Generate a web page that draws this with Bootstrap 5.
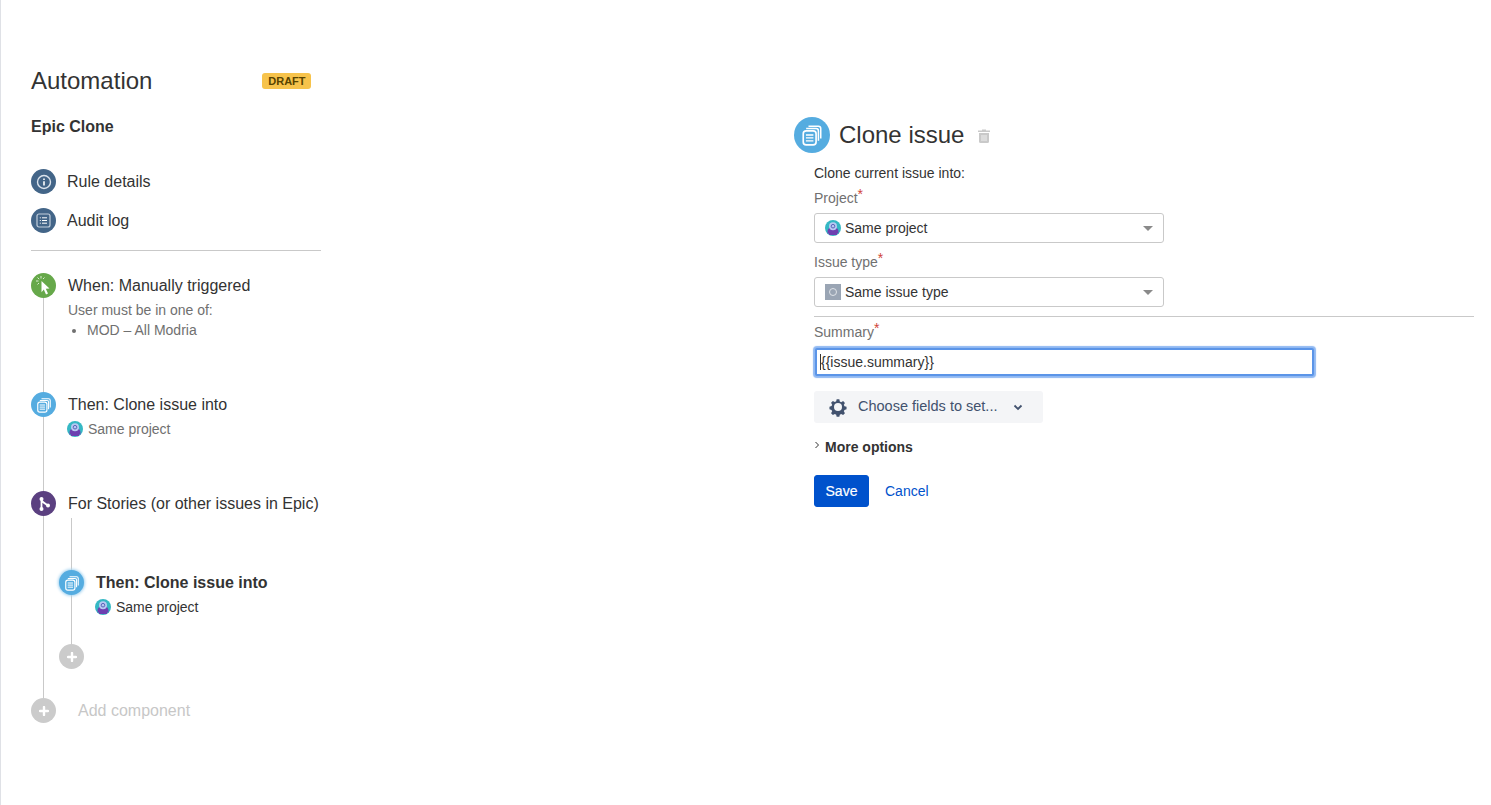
<!DOCTYPE html>
<html lang="en">
<head>
    <meta charset="UTF-8">
    <title>Automation - Epic Clone</title>
    <link href="https://cdn.jsdelivr.net/npm/bootstrap@5.3.1/dist/css/bootstrap.min.css" rel="stylesheet">
    <style>
        body {
            font-family: "Liberation Sans", Arial, sans-serif;
            color: #333;
            background: #fff;
            font-size: 14px;
            height: 805px;
            overflow: hidden;
        }

        /* page frame */
        .page { border-left: 1px solid #dfe1e6; height: 805px; }
        .sidebar { width: 320px; padding: 64px 0 0 30px; flex: none; }
        .panel { width: 680px; margin-left: 473px; padding-top: 117px; flex: none; }

        /* sidebar header */
        .app-title { font-size: 24px; line-height: 34px; font-weight: 400; margin: 0; }
        .draft-badge {
            width: 49px; height: 16px; line-height: 16px; background: #f7c34b; color: #594300;
            font-size: 11px; font-weight: 700; text-align: center; border-radius: 3px; margin-left: 110px;
        }
        .rule-name { font-size: 16px; line-height: 20px; font-weight: 700; margin: 19px 0 32px; }
        .side-link { font-size: 16px; line-height: 25px; margin-bottom: 14px; gap: 11px; }
        .side-rule { height: 1px; background: #c9c9c9; margin: 17px 0 22px; }

        /* icon discs */
        .disc {
            width: 25px; height: 25px; border-radius: 50%; flex: none; position: relative; z-index: 1;
            display: flex; align-items: center; justify-content: center;
        }
        .disc-slate { background: #436588; }
        .disc-green { background: #66a84a; }
        .disc-blue { background: #55ace0; }
        .disc-purple { background: #5b4080; }
        .disc-grey { background: #cbcbcb; }
        .disc-active { box-shadow: 0 0 3px 1px #a5d3f0; }

        /* timeline */
        .timeline { position: relative; }
        .timeline::before {
            content: ""; position: absolute; left: 12px; top: 10px; bottom: 12px; width: 1px; background: #c9c9c9;
        }
        .step { gap: 12px; }
        .step-title { font-size: 16px; line-height: 25px; color: #333; }
        .step-sub { font-size: 14px; line-height: 20px; color: #707070; }
        .step-sub ul { margin: 0; padding-left: 19px; }
        .step-sub.dark { color: #333; }
        .step-when { height: 119px; }
        .step-when .step-sub { margin-top: 2px; }
        .step-then { height: 99px; }
        .sub-project { margin-top: 2px; margin-left: -1px; gap: 5px; }
        .nested { position: relative; margin-left: 28px; padding-top: 55px; height: 183px; margin-top: -1px; }
        .nested::before {
            content: ""; position: absolute; left: 12px; top: 3px; bottom: 40px; width: 1px; background: #c9c9c9;
        }
        .nested-add { margin-top: 27px; }
        .add-title { font-size: 16px; color: #c7c7c7; margin-left: 10px; }

        /* right panel */
        .panel-disc { width: 36px; height: 36px; border-radius: 50%; background: #55ace0; }
        .panel-title { font-size: 24px; line-height: 36px; font-weight: 400; margin: 0 0 0 9px; }
        .trash { margin-left: 14px; margin-top: 2px; }
        .fields { padding-left: 20px; }
        .intro { line-height: 20px; margin-top: 10px; }
        .field-label { color: #707070; line-height: 20px; margin: 5px 0 0; display: block; }
        .field-label.next { margin-top: 9px; }
        .req { color: #d04437; position: relative; top: -4px; font-size: 14px; line-height: 0; }
        .pick {
            width: 350px; height: 30px; border: 1px solid #c9c9c9; border-radius: 3px;
            padding: 0 10px; margin-top: 5px; gap: 4px; background: #fff;
        }
        .pick-caret {
            margin-left: auto; border-left: 5px solid transparent; border-right: 5px solid transparent;
            border-top: 5px solid #8a8a8a;
        }
        .type-icon {
            width: 16px; height: 16px; background: #9aa5b4; flex: none;
            display: flex; align-items: center; justify-content: center;
        }
        .type-icon span { width: 8px; height: 8px; border: 1px solid #dfe3e8; border-radius: 50%; }
        .form-rule { height: 1px; background: #c9c9c9; margin: 9px 0 5px; }
        .summary-wrap { position: relative; width: 499px; margin: 6px 0 0 1px; }
        .summary-input.form-control {
            height: 28px; border: 2px solid #5b95e8; border-radius: 2px; padding: 0 4px;
            font-size: 14px; color: #333; box-shadow: 0 0 1px 2px #8fb8f2;
        }
        .text-caret { position: absolute; left: 5px; top: 6px; width: 1px; height: 16px; background: #333; }
        .fields-btn {
            width: 229px; height: 32px; background: #f4f5f7; border: 0; border-radius: 3px;
            color: #42526e; font-size: 14.500px; margin-top: 15px; padding: 0 0 0 14px; gap: 10px;
        }
        .fields-btn .chev { margin-left: 6px; }
        .more { font-weight: 700; line-height: 20px; margin-top: 14px; gap: 5px; }
        .actions { margin-top: 18px; gap: 16px; }
        .btn-save.btn {
            background: #0052cc; border-color: #0052cc; color: #fff; width: 55px; height: 32px;
            font-size: 14px; font-weight: 400; -webkit-text-stroke: .2px #fff; border-radius: 3px; padding: 0;
        }
        .cancel-link { color: #0052cc; text-decoration: none; }
    </style>
</head>
<body>
    <svg width="0" height="0" class="position-absolute">
        <defs>
            <symbol id="avatar" viewBox="0 0 16 16">
                <circle cx="8" cy="8" r="8" fill="#35b8c4"/>
                <path d="M2.5 12c0-2 .8-3.500 2-4h7c1.200 .5 2 2 2 4v1.500h-1.500V15h-8v-1.500H2.500z" fill="#6d3fb0"/>
                <circle cx="8" cy="6.200" r="4" fill="#b7c9f2"/>
                <circle cx="8" cy="6.200" r="1.800" fill="none" stroke="#5b64b8" stroke-width="1"/>
            </symbol>
            <symbol id="clone" viewBox="0 0 24 24">
                <path d="M9 4.500h8.500a2 2 0 0 1 2 2V15" fill="none" stroke="#fff" stroke-width="1.300"/>
                <path d="M7 6.500h8.500a2 2 0 0 1 2 2V17" fill="none" stroke="#fff" stroke-width="1.300"/>
                <rect x="4.500" y="8.500" width="11" height="12" rx="2.500" fill="#55ace0" stroke="#fff" stroke-width="1.400"/>
                <path d="M6.800 12h6.400M6.800 14.500h6.400M6.800 17h6.400" stroke="#fff" stroke-width="1.200"/>
            </symbol>
            <symbol id="plus" viewBox="0 0 10 10">
                <path d="M5 1v8M1 5h8" stroke="#fff" stroke-width="2.400" stroke-linecap="round"/>
            </symbol>
        </defs>
    </svg>

    <div class="page d-flex">
        <!-- Rule sidebar -->
        <div class="sidebar">
            <div class="d-flex align-items-center">
                <h1 class="app-title">Automation</h1>
                <span class="draft-badge">DRAFT</span>
            </div>
            <div class="rule-name">Epic Clone</div>

            <div class="side-link d-flex align-items-center">
                <span class="disc disc-slate">
                    <svg width="16" height="16" viewBox="0 0 16 16"><circle cx="8" cy="8" r="6.500" fill="none" stroke="#dbe3ec" stroke-width="1.400"/><path d="M8 7.200v4.300M8 4.400v1.500" stroke="#fff" stroke-width="1.600"/></svg>
                </span>
                Rule details
            </div>
            <div class="side-link d-flex align-items-center">
                <span class="disc disc-slate">
                    <svg width="15" height="15" viewBox="0 0 15 15"><rect x="1" y="1" width="13" height="13" rx="2" fill="none" stroke="#c3cfdc" stroke-width="1.200"/><path d="M6 4.800h5M6 7.500h5M6 10.200h5M3.800 4.800h1M3.800 7.500h1M3.800 10.200h1" stroke="#fff" stroke-width="1"/></svg>
                </span>
                Audit log
            </div>
            <div class="side-rule"></div>

            <div class="timeline">
                <div class="step step-when d-flex">
                    <span class="disc disc-green">
                        <svg width="25" height="25" viewBox="0 0 25 25"><path d="M10.500 8l8 7.500-3.700.3 2.200 4.700-2 .9-2.200-4.800-2.300 2.600z" fill="#fff"/><path d="M10 3v2.500M5 8h2.500M6.500 4.500l1.700 1.700M13.500 4.500L12 6M6.500 11.500L8 10" stroke="#dbeed2" stroke-width="1"/></svg>
                    </span>
                    <div>
                        <div class="step-title">When: Manually triggered</div>
                        <div class="step-sub">
                            User must be in one of:
                            <ul><li>MOD – All Modria</li></ul>
                        </div>
                    </div>
                </div>

                <div class="step step-then d-flex">
                    <span class="disc disc-blue"><svg width="20" height="20"><use href="#clone"/></svg></span>
                    <div>
                        <div class="step-title">Then: Clone issue into</div>
                        <div class="step-sub sub-project d-flex align-items-center">
                            <svg width="16" height="16"><use href="#avatar"/></svg> Same project
                        </div>
                    </div>
                </div>

                <div class="step d-flex">
                    <span class="disc disc-purple">
                        <svg width="16" height="16" viewBox="0 0 16 16"><path d="M5.500 3v10M5.500 4c.5 2.500 3 2.500 5.500 5" fill="none" stroke="#fff" stroke-width="1.800"/><circle cx="5.500" cy="3" r="2" fill="#fff"/><circle cx="5.500" cy="13" r="2" fill="#fff"/><circle cx="12" cy="9.500" r="2" fill="#fff"/></svg>
                    </span>
                    <div class="step-title">For Stories (or other issues in Epic)</div>
                </div>

                <div class="nested">
                    <div class="step d-flex">
                        <span class="disc disc-blue disc-active"><svg width="20" height="20"><use href="#clone"/></svg></span>
                        <div>
                            <div class="step-title fw-bold">Then: Clone issue into</div>
                            <div class="step-sub dark sub-project d-flex align-items-center">
                                <svg width="16" height="16"><use href="#avatar"/></svg> Same project
                            </div>
                        </div>
                    </div>
                    <div class="disc disc-grey nested-add"><svg width="10" height="10"><use href="#plus"/></svg></div>
                </div>

                <div class="step d-flex align-items-center">
                    <span class="disc disc-grey"><svg width="10" height="10"><use href="#plus"/></svg></span>
                    <span class="add-title">Add component</span>
                </div>
            </div>
        </div>

        <!-- Component editor -->
        <div class="panel">
            <div class="d-flex align-items-center">
                <span class="disc panel-disc"><svg width="28" height="28"><use href="#clone"/></svg></span>
                <h2 class="panel-title">Clone issue</h2>
                <svg class="trash" width="12" height="14" viewBox="0 0 12 14"><path d="M4 1.500V.5h4v1h4v1.500H0V1.500z" fill="#c9c9c9"/><path d="M1 4h10v8.500a1.500 1.500 0 0 1-1.500 1.500h-7A1.500 1.500 0 0 1 1 12.500z" fill="#c9c9c9"/><path d="M4 6v6M6 6v6M8 6v6" stroke="#fff" stroke-width=".7"/></svg>
            </div>
            <div class="fields">
                <div class="intro">Clone current issue into:</div>

                <label class="field-label">Project<span class="req">*</span></label>
                <div class="pick d-flex align-items-center">
                    <svg width="16" height="16"><use href="#avatar"/></svg> Same project
                    <span class="pick-caret"></span>
                </div>

                <label class="field-label next">Issue type<span class="req">*</span></label>
                <div class="pick d-flex align-items-center">
                    <span class="type-icon"><span></span></span> Same issue type
                    <span class="pick-caret"></span>
                </div>

                <div class="form-rule"></div>

                <label class="field-label m-0">Summary<span class="req">*</span></label>
                <div class="summary-wrap">
                    <input class="form-control summary-input" type="text" value="{{issue.summary}}">
                    <span class="text-caret"></span>
                </div>

                <button class="btn fields-btn d-flex align-items-center" type="button">
                    <svg width="20" height="20" viewBox="0 0 20 20"><path d="M8.500 1.500h3l.5 2.400 1.500.7 2.200-1.200 2 2.100-1.200 2.100.7 1.600 2.300.6v2.800l-2.300.6-.7 1.600 1.200 2.100-2 2.100-2.200-1.200-1.500.7-.5 2.400h-3l-.5-2.400-1.500-.7-2.200 1.200-2-2.100 1.200-2.100-.7-1.600-2.300-.6V9.600l2.300-.6.7-1.600-1.200-2.100 2-2.100 2.200 1.200 1.500-.7z" transform="translate(1 1) scale(.9)" fill="#42526e"/><circle cx="10" cy="10" r="4" fill="#f4f5f7"/></svg>
                    Choose fields to set...
                    <svg class="chev" width="10" height="7" viewBox="0 0 10 7"><path d="M1.500 1.500L5 5l3.500-3.500" fill="none" stroke="#42526e" stroke-width="1.800"/></svg>
                </button>

                <div class="more d-flex align-items-center">
                    <svg width="6" height="8" viewBox="0 0 6 8" class="mb-1"><path d="M1.500 1L4.500 4 1.500 7" fill="none" stroke="#333" stroke-width="1"/></svg>
                    More options
                </div>

                <div class="actions d-flex align-items-center">
                    <button class="btn btn-save" type="button">Save</button>
                    <a class="cancel-link" href="#">Cancel</a>
                </div>
            </div>
        </div>
    </div>

    <script src="https://cdn.jsdelivr.net/npm/bootstrap@5.3.1/dist/js/bootstrap.bundle.min.js"></script>
</body>
</html>
